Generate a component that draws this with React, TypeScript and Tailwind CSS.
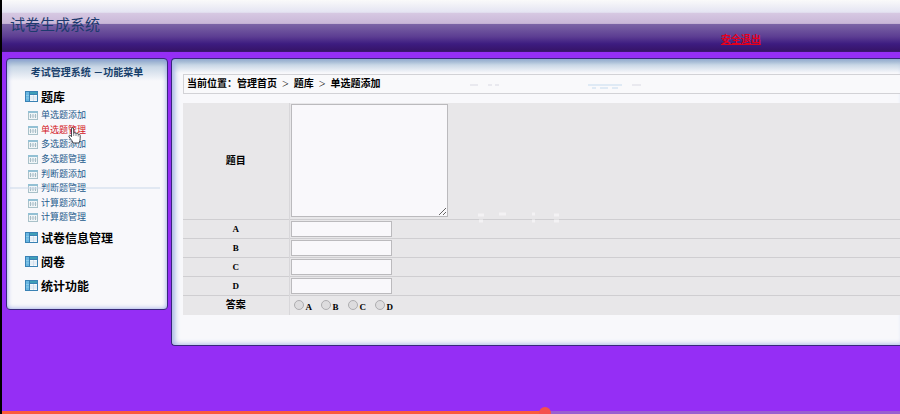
import React, { useState } from 'react';

interface MenuGroup {
    title: string;
    items: string[];
}

const MENU: MenuGroup[] = [
    {
        title: '题库',
        items: [
            '单选题添加',
            '单选题管理',
            '多选题添加',
            '多选题管理',
            '判断题添加',
            '判断题管理',
            '计算题添加',
            '计算题管理',
        ],
    },
    { title: '试卷信息管理', items: [] },
    { title: '阅卷', items: [] },
    { title: '统计功能', items: [] },
];

const OPTIONS = ['A', 'B', 'C', 'D'];

function GroupIcon() {
    return (
        <svg className="w-[13px] h-[11px] shrink-0" viewBox="0 0 13 11" aria-hidden="true">
            <rect width="13" height="11" fill="#3a82b4" />
            <rect x="1" y="1" width="3" height="9" fill="#69b7e2" />
            <rect x="5" y="1" width="7" height="2" fill="#3f9fb8" />
            <rect x="5" y="4" width="7" height="6" fill="#f6fafd" />
            <path d="M5 6h7M5 8h7M8.5 4v6" stroke="#c3d3e6" strokeWidth="0.6" />
            <path d="M1 4.500h3M1 7h3" stroke="#a5d6f0" strokeWidth="0.6" />
        </svg>
    );
}

function ItemIcon() {
    return (
        <svg className="w-[10px] h-[9px] shrink-0" viewBox="0 0 10 9" aria-hidden="true">
            <rect x="0.5" y="0.5" width="9" height="8" fill="#f1f6f8" stroke="#a9c1c9" />
            <rect x="0" y="0" width="10" height="2" fill="#93c0d4" />
            <path d="M2.500 3v4M5 3v4M7.500 3v4" stroke="#8fa9b6" strokeWidth="0.8" />
            <path d="M1.500 5h7" stroke="#b5c7cf" strokeWidth="0.6" />
        </svg>
    );
}

function HandCursor() {
    return (
        <svg className="absolute left-[66px] top-[127px] w-[13px] h-[17px] pointer-events-none" viewBox="0 0 13 17" aria-hidden="true">
            <path
                d="M3.500 9V2Q3.500 .7 4.600 .7T5.700 2V6.300Q6 5.500 7 5.700T8 6.700Q8.400 6 9.200 6.300T10.200 7.400Q11 6.900 11.600 7.400T12.200 8.500V11.500Q12.200 13.500 11 16H5Q4.400 13.800 2.600 12L1 9.800Q.6 8.600 1.600 8.300T3.500 9.800Z"
                fill="#ffffff"
                stroke="#34343c"
                strokeWidth="0.9"
                strokeLinejoin="round"
            />
            <path d="M5.700 6v3M8 6.700V9M10.200 7.400V9.500" stroke="#55555d" strokeWidth="0.7" />
        </svg>
    );
}

export default function App() {
    const [answer, setAnswer] = useState('');

    return (
        <div className="relative min-h-screen overflow-hidden flex flex-col bg-[#952ef5] border-l-2 border-black font-['Liberation_Serif','Noto_Sans_CJK_SC',sans-serif]">
            <header className="h-[52px] shrink-0 flex items-start justify-between border-b border-[#3b1670] bg-[linear-gradient(to_bottom,#fafafa_0%,#e4e4f2_24%,#d6c8e2_26%,#c9b7d8_46%,#7c65a6_47%,#5c3d92_72%,#3d1c80_86%,#361468_100%)]">
                <h1 className="pl-2 pt-[15px] text-[15px] leading-5 text-[#1d3a6e]">试卷生成系统</h1>
                <a href="#logout" className="mr-[139px] pt-8 text-[10px] leading-4 font-bold text-[#e5001c] underline">安全退出</a>
            </header>

            <div className="flex items-start gap-[3px] pl-1 pt-1.5">
                <nav className="w-[162px] shrink-0 h-[252px] rounded border border-[#38277c] bg-[linear-gradient(to_bottom,#8ba6c6_0px,#c9d7e6_8px,#f8f8fb_22px)] shadow-[inset_0_0_5px_#8b9ce0]">
                    <h2 className="pt-1.5 text-center text-[10px] leading-4 font-bold text-[#183f6b]">考试管理系统 －功能菜单</h2>
                    <ul className="pl-[18px] pt-[3px]">
                        {MENU.map((group) => (
                            <li key={group.title}>
                                <a href="#menu" className="flex items-center gap-[3px] h-6 text-[12px] leading-5 font-bold text-black">
                                    <GroupIcon />
                                    <span className="pt-1">{group.title}</span>
                                </a>
                                {group.items.length > 0 && (
                                    <ul className="pl-[3px] flex flex-col h-[117px]">
                                        {group.items.map((item) => (
                                            <li key={item} className="flex-1 min-h-0">
                                                <a
                                                    href="#item"
                                                    className={`flex items-start gap-[3px] text-[9px] leading-[15px] ${item === '单选题管理' ? 'text-[#d3141c]' : 'text-[#1d5a8c]'}`}
                                                >
                                                    <span className="pt-[3px]">
                                                        <ItemIcon />
                                                    </span>
                                                    <span>{item}</span>
                                                </a>
                                            </li>
                                        ))}
                                    </ul>
                                )}
                            </li>
                        ))}
                    </ul>
                </nav>

                <main className="flex-1 min-w-0 h-[288px] pl-[11px] pt-[15px] rounded-l border border-r-0 border-[#38277c] bg-[linear-gradient(to_bottom,#8ba6c6_0px,#c9d7e6_6px,#f8f8fb_14px)] shadow-[inset_3px_-1px_5px_#a9b9e4]">
                    <div className="h-5 pl-[3px] border border-r-0 border-[#d2d2d6] bg-[#f9f9fb] text-[10px] leading-[18px] font-bold text-black flex gap-[5px]">
                        <span>当前位置：管理首页</span>
                        <span className="text-[12px] font-normal">&gt;</span>
                        <span>题库</span>
                        <span className="text-[12px] font-normal">&gt;</span>
                        <span>单选题添加</span>
                    </div>

                    <table className="mt-[9px] w-full table-fixed border-collapse bg-[#e8e7e9] text-[10px] text-black">
                        <tbody>
                            <tr className="border-b border-[#cfced1]">
                                <th className="w-[106px] border-r border-[#d8d7da]">
                                    <label htmlFor="question">题目</label>
                                </th>
                                <td className="h-[116px] pl-px">
                                    <textarea id="question" className="block w-[157px] h-[113px] bg-[#f9f8fb] border border-[#bbbabd] outline-none" />
                                </td>
                            </tr>
                            {OPTIONS.map((option) => (
                                <tr key={option} className="border-b border-[#cfced1]">
                                    <th className="h-[19px] text-[9px] leading-4 border-r border-[#d8d7da]">
                                        <label htmlFor={`option-${option}`}>{option}</label>
                                    </th>
                                    <td className="pl-px">
                                        <input id={`option-${option}`} type="text" className="block w-[101px] h-4 bg-[#f9f8fb] border border-[#bbbabd] outline-none" />
                                    </td>
                                </tr>
                            ))}
                            <tr>
                                <th className="h-5 leading-4 border-r border-[#d8d7da]">答案</th>
                                <td className="pl-1">
                                    <div className="flex">
                                        {OPTIONS.map((option) => (
                                            <label key={option} className="w-[27px] flex items-center gap-[2px] text-[9px] leading-4 font-bold">
                                                <input
                                                    type="radio"
                                                    name="answer"
                                                    value={option}
                                                    checked={answer === option}
                                                    onChange={() => setAnswer(option)}
                                                    className="appearance-none w-[10px] h-[10px] rounded-full border border-[#aeadb0] bg-[#dddcde] checked:bg-[#666]"
                                                />
                                                <span className="pt-1 leading-3">{option}</span>
                                            </label>
                                        ))}
                                    </div>
                                </td>
                            </tr>
                        </tbody>
                    </table>
                </main>
            </div>

            {/* faint scan line and marks over the page */}
            <div className="absolute left-2 top-[187px] w-[150px] h-[2px] bg-[#c9d8ea]/50 pointer-events-none" />
            <svg className="absolute left-[466px] top-[82px] w-[180px] h-2 pointer-events-none" viewBox="0 0 180 8" aria-hidden="true">
                <path d="M2 3h8M20 3h4M27 3h4M164 3h9" stroke="#e9e9ef" strokeWidth="2" />
                <path d="M120 3h34M124 6h4M132 6h8M144 6h6" stroke="#dfeaf5" strokeWidth="2" />
            </svg>
            <svg className="absolute left-[474px] top-[211px] w-[88px] h-3 pointer-events-none" viewBox="0 0 88 12" aria-hidden="true">
                <path d="M2 4h6M23 3h7M56 3h3M78 4h5M3 10h4M56 10h3M78 10h5" stroke="#f3f2f4" strokeWidth="3" />
            </svg>

            <HandCursor />

            <div className="absolute inset-x-0 bottom-0 h-[3px] bg-[#9a5fd0]">
                <div className="relative h-full w-[60.5%] bg-[#fb5a3c]">
                    <span className="absolute -right-1.5 -top-1 w-3 h-3 rounded-full bg-[#f4504c]" />
                </div>
            </div>
        </div>
    );
}
